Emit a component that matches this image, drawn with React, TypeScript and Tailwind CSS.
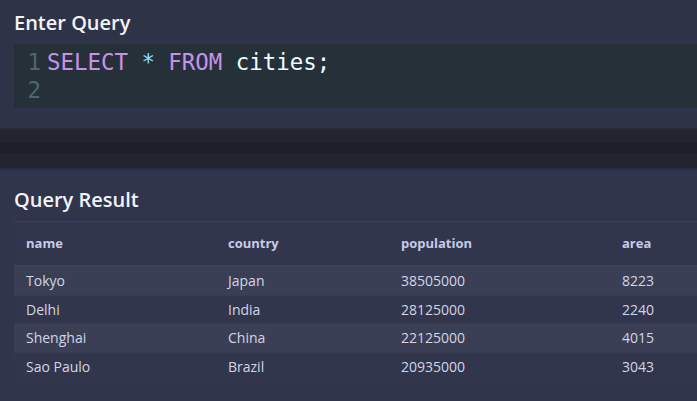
const rows = [
  { name: 'Tokyo', country: 'Japan', population: '38505000', area: '8223' },
  { name: 'Delhi', country: 'India', population: '28125000', area: '2240' },
  { name: 'Shenghai', country: 'China', population: '22125000', area: '4015' },
  { name: 'Sao Paulo', country: 'Brazil', population: '20935000', area: '3043' },
]

const cols = ['w-[202px]', 'w-[173px]', 'w-[221px]', 'w-[120px]']

export default function App() {
  return (
    <div className="flex h-[401px] w-[697px] flex-col overflow-hidden bg-[#30344a] font-['Open_Sans',sans-serif]">
      {/* editor panel */}
      <div className="h-[128px] shrink-0 bg-[#2f3348] pl-[14px] pt-[8px]">
        <h2 className="text-[20px] font-semibold leading-[30px] text-[#f2f3f8]">Enter Query</h2>
        <div className="mt-[6px] flex h-[64px] bg-[#263039] py-[4px] pl-[13px] font-['DejaVu_Sans_Mono',monospace] text-[22.4px] leading-[28px]">
          <div className="mr-[6px] w-[14px] text-right text-[#4d6770]">
            <div>1</div>
            <div>2</div>
          </div>
          <div className="whitespace-pre">
            <div>
              <span className="text-[#c792ea]">SELECT</span> <span className="text-[#89ddff]">*</span>{' '}
              <span className="text-[#c792ea]">FROM</span> <span className="text-[#eeffff]">cities;</span>
            </div>
            <div> </div>
          </div>
        </div>
      </div>

      {/* resize handle */}
      <div className="flex h-[42px] shrink-0 flex-col">
        <div className="h-[2px] bg-[#272a37]" />
        <div className="h-[13px] bg-[#22252f]" />
        <div className="h-[10px] bg-[#1c1f29]" />
        <div className="h-[15px] bg-[#22252f]" />
        <div className="h-[2px] bg-[#2a2d3c]" />
      </div>

      {/* result panel */}
      <div className="flex-1 bg-[#31354b] pl-[14px] pt-[15px]">
        <h2 className="text-[20px] font-semibold leading-[30px] text-[#f2f3f8]">Query Result</h2>
        <div className="mt-[6px] w-[716px] border-t border-[#3d4156] bg-[#32364c]">
          <div className="flex h-[45px] items-center border-b-2 border-[#3e4257] pt-[1px] text-[13px] font-bold text-[#c6cbe8]">
            {['name', 'country', 'population', 'area'].map((h, i) => (
              <div key={h} className={`${cols[i]} pl-[12px]`}>
                {h}
              </div>
            ))}
          </div>
          {rows.map((r, idx) => (
            <div
              key={r.name}
              className={`flex h-[28.7px] items-center pb-[1px] text-[14px] text-[#d2d5e6] ${
                idx < rows.length - 1 ? 'border-b border-[#383c51]' : ''
              } ${idx % 2 === 0 ? 'bg-[#3b3f55]' : 'bg-[#32364c]'}`}
            >
              {[r.name, r.country, r.population, r.area].map((v, i) => (
                <div key={i} className={`${cols[i]} pl-[12px]`}>
                  {v}
                </div>
              ))}
            </div>
          ))}
        </div>
      </div>
    </div>
  )
}
